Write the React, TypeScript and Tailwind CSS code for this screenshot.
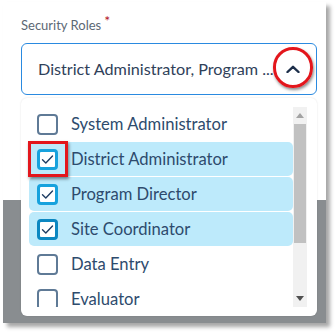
import React from "react";

const rows = [
  { label: "System Administrator", checked: false },
  { label: "District Administrator", checked: true, box: "#17a2dd" },
  { label: "Program Director", checked: true, box: "#17a2dd" },
  { label: "Site Coordinator", checked: true, box: "#0c87c1" },
  { label: "Data Entry", checked: false },
  { label: "Evaluator", checked: false },
];

function Check({ checked, color }: { checked: boolean; color?: string }) {
  if (!checked) {
    return <div className="w-[21px] h-[21px] shrink-0 rounded-[4px] border-2 border-[#5f7a96] bg-white" />;
  }
  return (
    <div
      className="w-[21px] h-[21px] shrink-0 rounded-[4px] border-[3px] bg-white flex items-center justify-center"
      style={{ borderColor: color }}
    >
      <svg width="13" height="11" viewBox="0 0 13 11" fill="none">
        <path d="M1.5 5.8 L4.8 9 L11.5 2" stroke="#1f3d63" strokeWidth="1.4" strokeLinecap="round" strokeLinejoin="round" />
      </svg>
    </div>
  );
}

export default function App() {
  return (
    <div className="w-[336px] h-[334px] bg-white overflow-hidden" style={{ fontFamily: "Lato, 'Open Sans', sans-serif" }}>
      <div className="relative ml-[3px] mt-[2px] w-[323px] h-[321px] bg-white shadow-[4px_4px_4px_rgba(0,0,0,0.35)] flex flex-col">
        <div className="h-[198px] bg-white px-[18px] pt-[14px]">
          <div className="flex items-start text-[13px] text-[#5c6874] leading-[18px]">
            <span>Security Roles</span>
            <span className="text-[#b3121b] text-[14px] ml-[3px] -mt-[4px]">*</span>
          </div>
          <div className="mt-[9px] h-[52px] w-[296px] rounded-[6px] border border-[#2a8ae0] flex items-center pl-[16px] pr-[14px]">
            <span className="flex-1 text-[16.2px] text-[#2f4159] whitespace-nowrap overflow-hidden">District Administrator, Program ...</span>
            <svg width="14" height="8" viewBox="0 0 14 8" fill="none" className="mr-[2px]">
              <path d="M1.5 7 L7 1.8 L12.5 7" stroke="#1d2f4a" strokeWidth="2.4" strokeLinecap="round" strokeLinejoin="round" />
            </svg>
          </div>
        </div>
        <div className="flex-1 bg-[#898d90]" />

        {/* red circle annotation */}
        <div className="absolute left-[270px] top-[45px] w-[40px] h-[41px] rounded-full border-[3px] border-[#e3161c] shadow-[1px_2px_3px_rgba(0,0,0,0.45)]" />

        {/* dropdown panel */}
        <div className="absolute left-[18px] top-[96px] w-[296px] h-[218px] bg-white rounded-[6px] shadow-[0_0_2px_rgba(0,0,0,0.12)] pt-[9px] pb-[9px] pl-[8px] pr-[10px] flex">
          <div className="flex-1 h-[200px] overflow-hidden flex flex-col">
            {rows.map((r) => (
              <div
                key={r.label}
                className={`shrink-0 h-[34px] mb-px rounded-[5px] flex items-center pl-[8px] ${r.checked ? "bg-[#bdeafb]" : ""}`}
              >
                <Check checked={r.checked} color={r.box} />
                <span className="ml-[13px] text-[16.6px] text-[#2e4b6d] whitespace-nowrap">{r.label}</span>
              </div>
            ))}
          </div>
          <div className="w-[14px] h-[200px] bg-[#f1f1f1] flex flex-col items-center">
            <div className="h-[17px] flex items-center justify-center">
              <svg width="8" height="5" viewBox="0 0 8 5"><path d="M0 5 L4 0 L8 5 Z" fill="#a3a3a3" /></svg>
            </div>
            <div className="w-[12px] h-[119px] bg-[#c1c1c1]" />
            <div className="flex-1" />
            <div className="h-[17px] flex items-center justify-center">
              <svg width="8" height="5" viewBox="0 0 8 5"><path d="M0 0 L8 0 L4 5 Z" fill="#505050" /></svg>
            </div>
          </div>
        </div>

        {/* red square annotation */}
        <div className="absolute left-[25px] top-[139px] w-[40px] h-[36px] border-[3px] border-[#e3161c] shadow-[1px_2px_3px_rgba(0,0,0,0.45)]" />
      </div>
    </div>
  );
}
